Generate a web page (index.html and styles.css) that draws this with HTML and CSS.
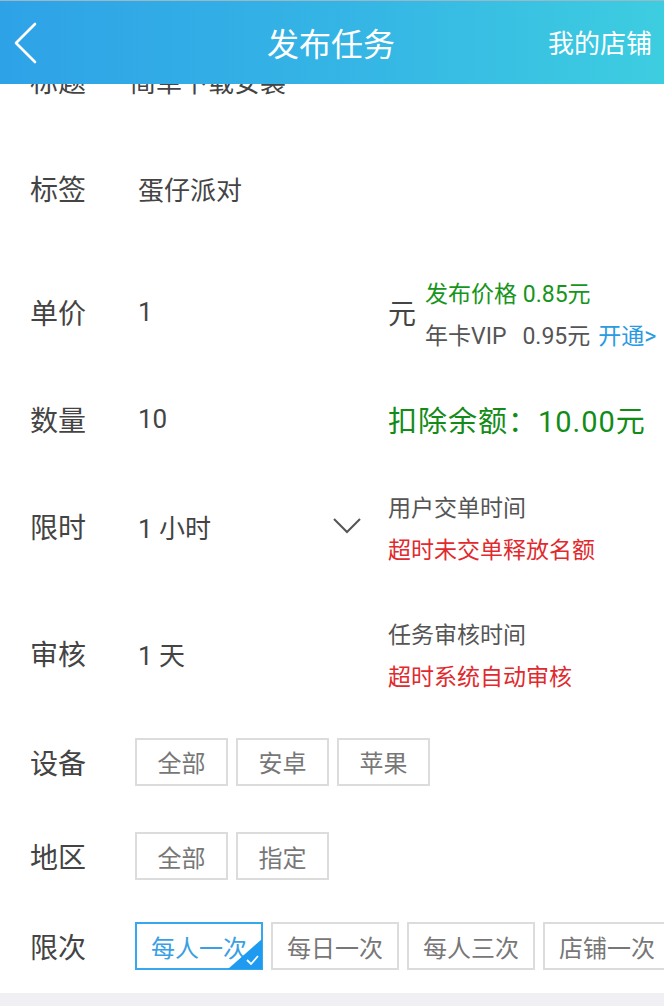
FILE: index.html
```html
<!DOCTYPE html>
<html lang="zh-CN">
<head>
  <meta charset="UTF-8">
  <meta name="viewport" content="width=device-width, initial-scale=1.0">
  <title>发布任务</title>
  <link rel="stylesheet" href="styles.css">
</head>
<body>
  <!-- 顶部导航栏 -->
  <div class="navbar">
    <a class="nav-back" href="javascript:;">
      <svg width="24" height="44" viewBox="0 0 24 44"><polyline points="21,3 2,22 21,41" fill="none" stroke="#fff" stroke-width="2.6" stroke-linecap="round" stroke-linejoin="round"/></svg>
    </a>
    <div class="nav-title">发布任务</div>
    <a class="nav-right" href="javascript:;">我的店铺</a>
  </div>

  <div class="form">
    <div class="form-row row-title">
      <div class="form-label">标题</div>
      <div class="form-value">简单下载安装</div>
    </div>

    <div class="form-row row-tag">
      <div class="form-label">标签</div>
      <div class="form-value">蛋仔派对</div>
    </div>

    <div class="form-row row-price">
      <div class="form-label">单价</div>
      <div class="form-value">1</div>
      <div class="form-side">
        <span class="unit">元</span>
        <div class="side-lines">
          <div class="text-green">发布价格 0.85元</div>
          <div class="text-gray">年卡VIP<span class="vip-price">0.95元</span><a class="link-open" href="javascript:;">开通&gt;</a></div>
        </div>
      </div>
    </div>

    <div class="form-row row-count">
      <div class="form-label">数量</div>
      <div class="form-value">10</div>
      <div class="form-side">
        <span class="deduct">扣除余额：10.00元</span>
      </div>
    </div>

    <div class="form-row row-limit">
      <div class="form-label">限时</div>
      <div class="form-value select-value">
        <span>1 小时</span>
        <svg class="arrow-down" width="30" height="20" viewBox="0 0 30 20"><polyline points="2,3 15,16 28,3" fill="none" stroke="#555" stroke-width="2"/></svg>
      </div>
      <div class="form-side">
        <div class="side-lines">
          <div class="text-gray">用户交单时间</div>
          <div class="text-red">超时未交单释放名额</div>
        </div>
      </div>
    </div>

    <div class="form-row row-audit">
      <div class="form-label">审核</div>
      <div class="form-value">1 天</div>
      <div class="form-side">
        <div class="side-lines">
          <div class="text-gray">任务审核时间</div>
          <div class="text-red">超时系统自动审核</div>
        </div>
      </div>
    </div>

    <div class="form-row row-device">
      <div class="form-label">设备</div>
      <div class="option-list">
        <span class="option">全部</span>
        <span class="option">安卓</span>
        <span class="option">苹果</span>
      </div>
    </div>

    <div class="form-row row-area">
      <div class="form-label">地区</div>
      <div class="option-list">
        <span class="option">全部</span>
        <span class="option">指定</span>
      </div>
    </div>

    <div class="form-row row-times">
      <div class="form-label">限次</div>
      <div class="option-list">
        <span class="option option-active">每人一次
          <svg class="option-check" width="34" height="30" viewBox="0 0 34 30"><polygon points="34,0 34,30 0,30" fill="#1e9bf0"/><polyline points="19,21 23,25 30,17" fill="none" stroke="#fff" stroke-width="1.8"/></svg>
        </span>
        <span class="option">每日一次</span>
        <span class="option">每人三次</span>
        <span class="option">店铺一次</span>
      </div>
    </div>
  </div>
  <div class="footer-gap"></div>
</body>
</html>
```

FILE: styles.css
```css
body {
  font-family: 'Roboto', 'Noto Sans CJK SC', 'Noto Sans', sans-serif;
  background: #fff;
  margin: 0;
  color: #444;
  overflow: hidden;
}
/* 导航栏 */
.navbar {
  position: fixed;
  top: 0;
  left: 0;
  right: 0;
  height: 83px;
  border-top: 1px solid #9bb8c8;
  background: linear-gradient(to right, #2ea2e7, #35b6e5 55%, #3dcde0);
  display: flex;
  align-items: center;
  z-index: 10;
}
.nav-back {
  display: flex;
  align-items: center;
  width: 120px;
  padding-left: 14px;
  box-sizing: border-box;
  height: 100%;
}
.nav-title {
  flex: 1;
  text-align: center;
  color: #fff;
  font-size: 32px;
  padding-left: 14px;
  margin-top: -2px;
}
.nav-right {
  width: 136px;
  text-align: right;
  padding-right: 12px;
  box-sizing: border-box;
  color: #fff;
  font-size: 26px;
  text-decoration: none;
  margin-top: -2px;
}
/* 表单 */
.form {
  padding-top: 26px;
}
.form-row {
  display: flex;
  align-items: center;
  padding-left: 30px;
  box-sizing: border-box;
}
.row-title { height: 108px; }
.row-tag { height: 108px; }
.row-price { height: 140px; }
.row-count { height: 74px; }
.row-limit { height: 140px; }
.row-audit { height: 114px; }
.row-device { height: 103px; }
.row-area { height: 86px; }
.row-times { height: 94px; }
.form-label {
  width: 108px;
  flex-shrink: 0;
  font-size: 28px;
  color: #444;
}
.form-value {
  width: 250px;
  flex-shrink: 0;
  font-size: 26px;
  color: #444;
}
.row-title .form-value {
  margin-left: -8px;
}
.select-value {
  display: flex;
  align-items: center;
  justify-content: space-between;
  padding-right: 26px;
  box-sizing: border-box;
}
.form-side {
  display: flex;
  align-items: center;
  white-space: nowrap;
}
.unit {
  font-size: 28px;
  color: #444;
  margin-right: 9px;
}
.side-lines {
  font-size: 23px;
  line-height: 42px;
  padding-top: 7px;
}
.text-green {
  color: #17951c;
}
.text-gray {
  color: #555;
}
.text-red {
  color: #e12a2e;
}
.vip-price {
  margin-left: 16px;
  margin-right: 8px;
}
.link-open {
  color: #2a9ae2;
  text-decoration: none;
}
.deduct {
  font-size: 29px;
  letter-spacing: 1px;
  color: #138c17;
}
/* 选项按钮 */
.option-list {
  display: flex;
  gap: 8px;
  margin-left: -3px;
  white-space: nowrap;
}
.option {
  position: relative;
  display: flex;
  align-items: center;
  justify-content: center;
  min-width: 93px;
  height: 48px;
  padding: 0 14px;
  box-sizing: border-box;
  border: 2px solid #dcdcdc;
  font-size: 24px;
  color: #777;
}
.option-active {
  border-color: #37a7ee;
  color: #3a9fe4;
}
.option-check {
  position: absolute;
  right: -1px;
  bottom: -1px;
}
.footer-gap {
  height: 20px;
  background: #f0f0f4;
}
```
